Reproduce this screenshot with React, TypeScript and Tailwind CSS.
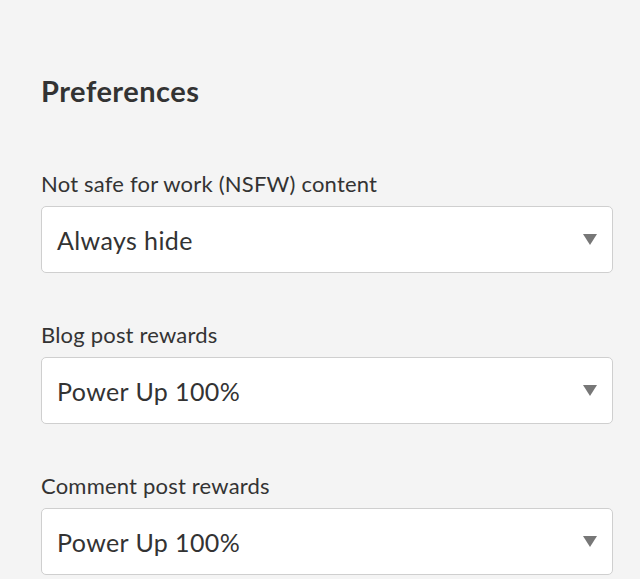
import React from "react";

function Select({ value }: { value: string }) {
  return (
    <div className="flex items-center justify-between w-[572px] h-[67px] bg-white border border-[#cfcfcf] rounded-[5px] pl-[15px] pr-[15px]">
      <span className="text-[25px] leading-[30px] tracking-[0.4px] text-[#333333]">{value}</span>
      <svg width="14" height="11" viewBox="0 0 14 11" className="block">
        <polygon points="0,0 14,0 7,11" fill="#777777" />
      </svg>
    </div>
  );
}

function Field({ label, value }: { label: string; value: string }) {
  return (
    <div className="flex flex-col">
      <div className="text-[22px] leading-[26px] tracking-[0.2px] text-[#333333] mb-[9px]">{label}</div>
      <Select value={value} />
    </div>
  );
}

export default function App() {
  return (
    <div
      className="w-[640px] h-[579px] bg-[#f4f4f4] overflow-hidden pl-[41px] pt-[74px]"
      style={{ fontFamily: "Lato, 'Open Sans', sans-serif" }}
    >
      <h2 className="text-[29px] leading-[34px] font-bold tracking-[0.5px] text-[#333333]">Preferences</h2>
      <div className="mt-[63px] flex flex-col gap-[49px]">
        <Field label="Not safe for work (NSFW) content" value="Always hide" />
        <Field label="Blog post rewards" value="Power Up 100%" />
        <Field label="Comment post rewards" value="Power Up 100%" />
      </div>
    </div>
  );
}
